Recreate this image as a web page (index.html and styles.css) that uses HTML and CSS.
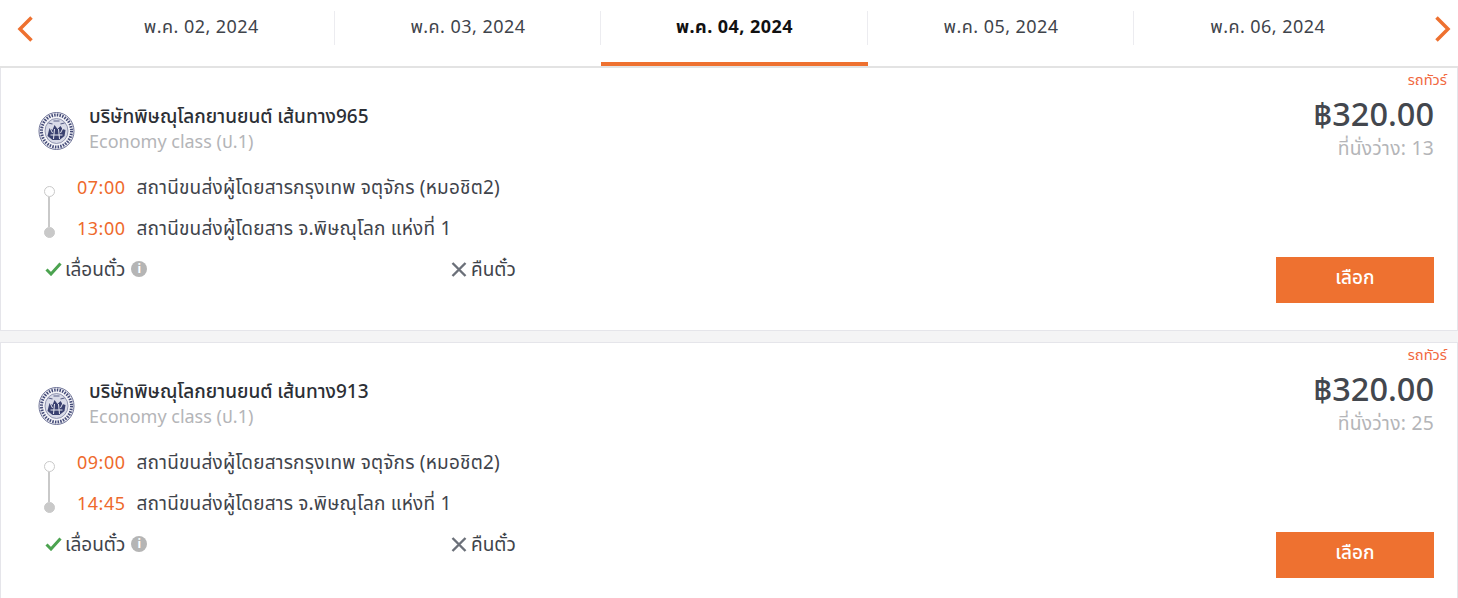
FILE: index.html
```html
<!DOCTYPE html>
<html lang="th">
<head>
<meta charset="utf-8">
<title>Bus results</title>
<link rel="stylesheet" href="styles.css">
</head>
<body>
<svg class="defs" width="0" height="0" aria-hidden="true">
  <symbol id="seal" viewBox="0 0 36 38">
    <ellipse cx="18" cy="19" rx="17.500" ry="18.500" fill="#f4f4f8" stroke="#6d7296" stroke-width="1"/>
    <ellipse cx="18" cy="19" rx="15" ry="16" fill="none" stroke="#444b78" stroke-width="3" stroke-dasharray="1.500 1.200"/>
    <ellipse cx="18" cy="19" rx="11.500" ry="12.500" fill="#d9dbe8" stroke="#7c81a1" stroke-width=".8"/>
    <path d="M9 24l2-8 3 2 2-5 3 4 3-3 2 3 3 1-1 6-5 4h-7z" fill="#39406f"/>
    <path d="M11 15l3 6M25 15l-3 6M15 27l1-10M21 27l-1-10M12 23h12" stroke="#e6e7f0" stroke-width="1"/>
    <path d="M10 11l4 1M22 12l4-1M15 9h6" stroke="#5a6088" stroke-width="1.200"/>
  </symbol>
</svg>
<nav class="dates">
  <a class="arrow"><svg width="18" height="28" viewBox="0 0 18 28"><path d="M15.500 2.500L4 14l11.500 11.500" fill="none" stroke="#ee7130" stroke-width="3.500"/></svg></a>
  <div class="date-list">
    <a class="date">พ.ค. 02, 2024</a>
    <a class="date">พ.ค. 03, 2024</a>
    <a class="date active">พ.ค. 04, 2024</a>
    <a class="date">พ.ค. 05, 2024</a>
    <a class="date">พ.ค. 06, 2024</a>
  </div>
  <a class="arrow right"><svg width="18" height="28" viewBox="0 0 18 28"><path d="M2.500 2.500L14 14 2.500 25.500" fill="none" stroke="#ee7130" stroke-width="3.500"/></svg></a>
</nav>
<main class="results">
  <article class="card">
    <div class="tag">รถทัวร์</div>
    <div class="card-body">
      <div class="info">
        <div class="operator">
          <svg class="logo"><use href="#seal"/></svg>
          <div>
            <div class="name">บริษัทพิษณุโลกยานยนต์ เส้นทาง965</div>
            <div class="class">Economy class (ป.1)</div>
          </div>
        </div>
        <div class="route">
          <div class="rail"><span class="dot"></span><span class="line"></span><span class="dot fill"></span></div>
          <div class="stops">
            <div class="stop"><span class="time">07:00</span><span>สถานีขนส่งผู้โดยสารกรุงเทพ จตุจักร (หมอชิต2)</span></div>
            <div class="stop"><span class="time">13:00</span><span>สถานีขนส่งผู้โดยสาร จ.พิษณุโลก แห่งที่ 1</span></div>
          </div>
        </div>
        <div class="rules">
          <div class="rule change">
            <svg class="ico" width="17" height="14" viewBox="0 0 17 14"><path d="M1.500 7.500L6 12 15.500 1.500" fill="none" stroke="#4ca350" stroke-width="3"/></svg>
            <span>เลื่อนตั๋ว</span>
            <span class="i">i</span>
          </div>
          <div class="rule">
            <svg class="ico" width="16" height="15" viewBox="0 0 16 15"><path d="M1.500 1l13 13M14.500 1l-13 13" fill="none" stroke="#6b7079" stroke-width="2.400"/></svg>
            <span>คืนตั๋ว</span>
          </div>
        </div>
      </div>
      <div class="buy">
        <div class="price">฿320.00</div>
        <div class="seats">ที่นั่งว่าง: 13</div>
        <a class="select">เลือก</a>
      </div>
    </div>
  </article>
  <article class="card">
    <div class="tag">รถทัวร์</div>
    <div class="card-body">
      <div class="info">
        <div class="operator">
          <svg class="logo"><use href="#seal"/></svg>
          <div>
            <div class="name">บริษัทพิษณุโลกยานยนต์ เส้นทาง913</div>
            <div class="class">Economy class (ป.1)</div>
          </div>
        </div>
        <div class="route">
          <div class="rail"><span class="dot"></span><span class="line"></span><span class="dot fill"></span></div>
          <div class="stops">
            <div class="stop"><span class="time">09:00</span><span>สถานีขนส่งผู้โดยสารกรุงเทพ จตุจักร (หมอชิต2)</span></div>
            <div class="stop"><span class="time">14:45</span><span>สถานีขนส่งผู้โดยสาร จ.พิษณุโลก แห่งที่ 1</span></div>
          </div>
        </div>
        <div class="rules">
          <div class="rule change">
            <svg class="ico" width="17" height="14" viewBox="0 0 17 14"><path d="M1.500 7.500L6 12 15.500 1.500" fill="none" stroke="#4ca350" stroke-width="3"/></svg>
            <span>เลื่อนตั๋ว</span>
            <span class="i">i</span>
          </div>
          <div class="rule">
            <svg class="ico" width="16" height="15" viewBox="0 0 16 15"><path d="M1.500 1l13 13M14.500 1l-13 13" fill="none" stroke="#6b7079" stroke-width="2.400"/></svg>
            <span>คืนตั๋ว</span>
          </div>
        </div>
      </div>
      <div class="buy">
        <div class="price">฿320.00</div>
        <div class="seats">ที่นั่งว่าง: 25</div>
        <a class="select">เลือก</a>
      </div>
    </div>
  </article>
</main>
</body>
</html>
```

FILE: styles.css
```css
* { box-sizing: border-box; }
html, body { margin: 0; padding: 0; height: 598px; overflow: hidden; }
body {
  background: #f4f4f5;
  font-family: "Noto Sans", "Noto Sans Thai", "Open Sans", sans-serif;
  color: #3f444b;
  font-size: 19px;
}
.defs { position: absolute; }
.dates {
  display: flex;
  height: 68px;
  background: #fff;
  border-bottom: 2px solid #e3e3e3;
}
.arrow { width: 68px; display: flex; padding: 15px 0 0 16px; }
.arrow.right { width: 57px; padding-left: 33px; }
.date-list { flex: 1; display: grid; grid-template-columns: repeat(5, 1fr); height: 66px; }
.date {
  display: flex;
  align-items: flex-start;
  justify-content: center;
  position: relative;
  height: 66px;
  padding-top: 13px;
  line-height: 26px;
  font-size: 18px;
  letter-spacing: .45px;
}
.date + .date::before {
  content: "";
  position: absolute;
  left: -1px;
  top: 11px;
  height: 34px;
  width: 1px;
  background: #ececf0;
}
.date.active { color: #111; font-weight: 700; border-bottom: 4px solid #ee7130; }
.card {
  height: 263px;
  margin-bottom: 12px;
  background: #fff;
  border: 1px solid #e5e5ea;
  border-top: 0;
}
.card + .card { border-top: 1px solid #e5e5ea; height: 264px; margin-top: -1px; }
.tag {
  height: 24px;
  padding: 2px 10px 0 0;
  text-align: right;
  font-size: 14.700px;
  line-height: 18px;
  color: #f1693f;
}
.card-body { display: flex; justify-content: space-between; padding: 0 23px 0 38px; }
.operator { display: flex; gap: 13px; align-items: center; padding-top: 11px; }
.logo { width: 37px; height: 38px; margin-top: 6px; margin-left: -1px; margin-right: 1px; }
.name { font-size: 19px; line-height: 26px; font-weight: 500; color: #2c2f35; }
.class { font-size: 18px; line-height: 24px; color: #b4b5b8; }
.route { display: flex; margin-top: 21px; padding-left: 5px; }
.rail { width: 33px; display: flex; flex-direction: column; align-items: flex-start; padding-top: 12px; }
.dot { width: 11px; height: 11px; border-radius: 50%; border: 1px solid #c9c9c9; background: #fff; }
.dot.fill { background: #c9c9c9; }
.line { width: 2px; height: 30px; margin-left: 4px; background: #c9c9c9; }
.stop { display: flex; gap: 11px; height: 41px; line-height: 26px; letter-spacing: .2px; }
.stop:last-child { height: 40px; }
.time { color: #ee6a2c; font-size: 18px; letter-spacing: .5px; }
.rules { display: flex; padding-left: 6px; }
.rule { display: flex; align-items: center; gap: 4px; height: 28px; line-height: 28px; }
.rule.change { width: 406px; gap: 3px; }
.i {
  display: flex;
  align-items: center;
  justify-content: center;
  width: 16px;
  height: 16px;
  margin-left: 3px;
  border-radius: 50%;
  background: #b5b5b5;
  color: #fff;
  font-size: 12px;
  font-weight: 700;
  line-height: 16px;
}
.buy { display: flex; flex-direction: column; align-items: flex-end; }
.price { font-size: 32.500px; line-height: 44px; font-weight: 500; color: #43474e; }
.seats { font-size: 19.300px; line-height: 24px; letter-spacing: .25px; color: #b4b5b8; }
.select {
  display: flex;
  align-items: center;
  justify-content: center;
  width: 158px;
  height: 46px;
  margin-top: 97px;
  padding-bottom: 4px;
  background: #ee7130;
  color: #fff;
  font-size: 19px;
  font-weight: 500;
}
```
